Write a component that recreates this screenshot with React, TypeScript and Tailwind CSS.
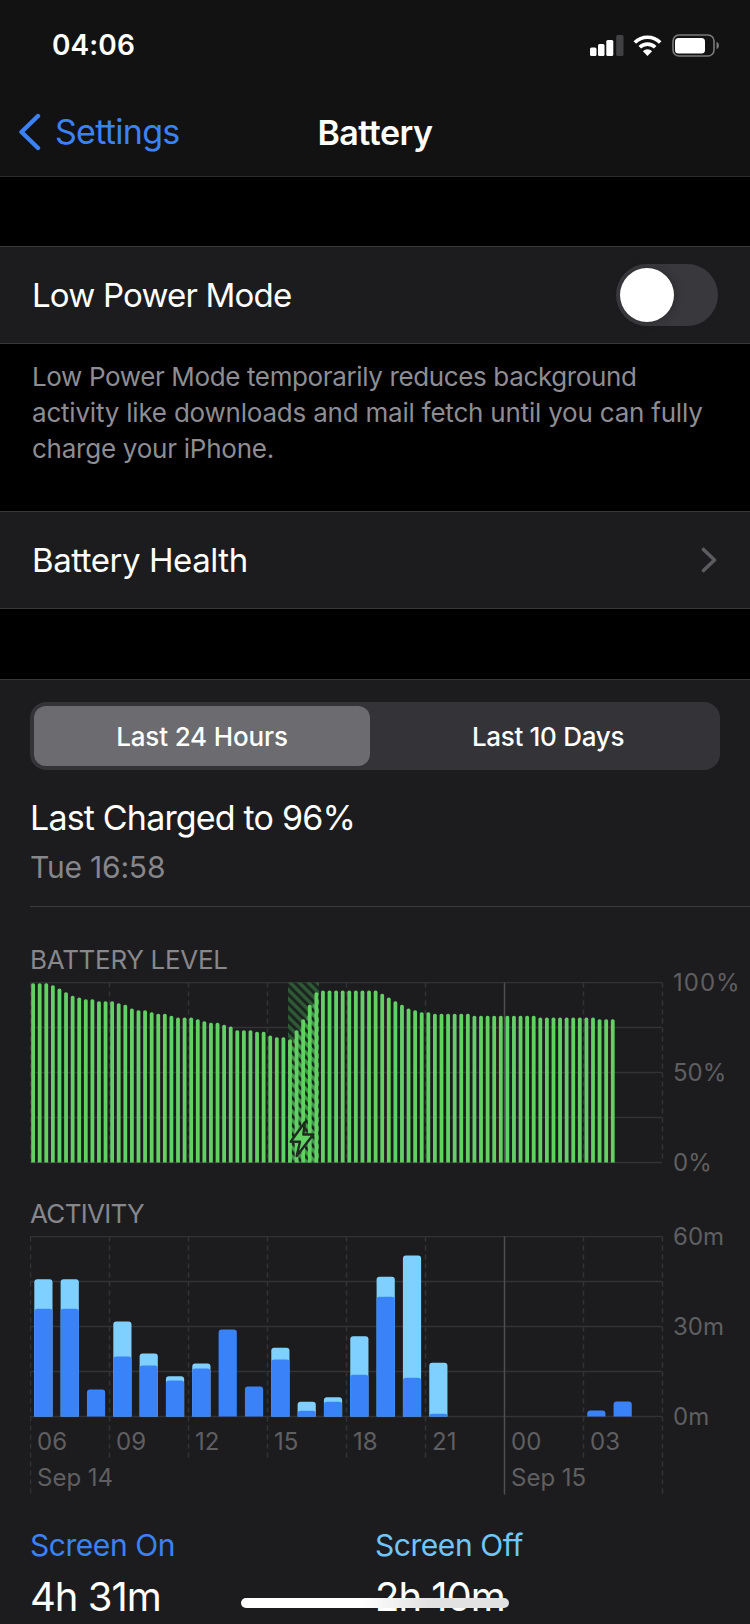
import React from "react";

const font = "font-['Inter','Liberation_Sans',sans-serif]";

const levelTops = [
  160,160,160,166,176,187,198,203,208,208,214,214,214,220,225,236,241,241,247,252,252,258,263,263,263,268,274,279,279,285,290,301,301,301,306,306,317,322,322,328,301,268,225,187,
  182,182,182,182,182,182,182,182,
  182,192,203,214,225,236,241,247,247,252,252,252,252,252,252,258,258,258,258,258,258,258,258,258,258,263,263,263,263,263,263,263,263,263,268,268,268,
];

const activity: [number, number, number][] = [
  [0,268,357],[1,268,357],[2,599,599],[3,395,500],[4,491,527],[5,559,572],[6,521,536],[7,419,419],[8,590,590],
  [9,474,509],[10,636,663],[11,622,636],[12,439,555],[13,261,321],[14,197,564],[15,519,672],[21,662,662],[22,635,635],
];

const grid = [30.5, 109.5, 188.5, 267.5, 346.5, 425.5, 504.5, 583.5, 662.5];

function roundTop(x: number, y: number, w: number, b: number, r: number) {
  const rr = Math.min(r, b - y);
  return `M${x} ${b}V${y + rr}Q${x} ${y} ${x + rr} ${y}H${x + w - rr}Q${x + w} ${y} ${x + w} ${y + rr}V${b}Z`;
}

function BatteryChart() {
  const base = 180;
  const tops = levelTops.map((t) => (t - 158) / 3);
  const bx = (i: number) => 1.2 + i * 6.587;
  const under = tops.map((t, i) => ({ t, x: bx(i), i })).filter((p) => p.i >= 39 && p.i <= 43);
  const poly = `258,${base} 258,${under[0].t} ${under.map((p) => `${p.x + 1.9},${p.t + 6}`).join(" ")} 289,${under[4].t} 289,${base}`;
  return (
    <svg width="640" height="182" viewBox="30 0 640 182" className="block shrink-0">
      <g transform="translate(30 0.5)">
        <defs>
          <pattern id="hatch" width="6.4" height="6.4" patternUnits="userSpaceOnUse" patternTransform="rotate(-45)">
            <rect width="3" height="6.4" fill="#1c2420" />
          </pattern>
        </defs>
        {[0, 45, 90, 135, 180].map((y) => (
          <line key={y} x1="0" x2="632" y1={y} y2={y} stroke="#333335" strokeWidth="1.5" />
        ))}
        {grid.map((x, i) =>
          i === 6 ? (
            <line key={x} x1={x - 30} x2={x - 30} y1="0" y2="180" stroke="#4e4e50" strokeWidth="1.5" />
          ) : (
            <line key={x} x1={x - 30} x2={x - 30} y1="0" y2="180" stroke="#333335" strokeWidth="1.5" strokeDasharray="5 4" />
          ),
        )}
        <rect x="258" y="0" width="31" height="180" fill="#2f5a36" />
        <polygon points={poly} fill="#43964a" />
        <rect x="258" y="0" width="31" height="180" fill="url(#hatch)" />
        {tops.map((t, i) => (
          <path key={i} d={roundTop(bx(i), t, 3.8, base, 1.7)} fill="#62d163" />
        ))}
        <path
          d="M275 139.5L260.7 159.3H270L266.7 173.5L283.3 152H273.3Z"
          fill="#62d163"
          stroke="#1f2b21"
          strokeWidth="2.4"
          strokeLinejoin="round"
        />
      </g>
    </svg>
  );
}

function ActivityChart() {
  return (
    <svg width="640" height="259" viewBox="30 0 640 259" className="block shrink-0">
      <g transform="translate(30 0.5)">
        {[0, 45, 90, 135, 180].map((y) => (
          <line key={y} x1="0" x2="632" y1={y} y2={y} stroke="#333335" strokeWidth="1.5" />
        ))}
        {grid.map((x, i) => {
          const tall = i === 0 || i === 6 || i === 8;
          return i === 6 ? (
            <line key={x} x1={x - 30} x2={x - 30} y1="0" y2="258" stroke="#4e4e50" strokeWidth="1.5" />
          ) : (
            <line key={x} x1={x - 30} x2={x - 30} y1="0" y2={tall ? 258 : 225} stroke="#333335" strokeWidth="1.5" strokeDasharray="5 4" />
          );
        })}
        {activity.map(([i, top, dark]) => {
          const x = 4.3 + i * 26.33;
          const y = (top - 140) / 3;
          const d = (dark - 140) / 3;
          return (
            <g key={i}>
              {top !== dark && <path d={roundTop(x, y, 18.2, 180, 3)} fill="#80d0ff" />}
              <path d={roundTop(x, d, 18.2, 180, 3)} fill="#3a82f7" />
            </g>
          );
        })}
      </g>
    </svg>
  );
}

function Divider() {
  return <div className="h-[1px] bg-[#38383a]" />;
}

export default function App() {
  return (
    <div className={`${font} relative w-[750px] h-[1624px] overflow-hidden bg-black text-white`}>
      <header className="h-[177px] bg-[#121212] border-b border-[#2c2c2e]">
        <div className="flex h-[90px] items-center justify-between pl-[52px] pr-[31px]">
          <span className="text-[28px] font-semibold tracking-[0.1px]">04:06</span>
          <div className="flex items-center">
            <svg width="34" height="21" viewBox="0 0 34 21" className="mr-[9px]">
              <rect x="0" y="12.5" width="6.5" height="8.5" rx="1.5" fill="#fff" />
              <rect x="8" y="9" width="6.5" height="12" rx="1.5" fill="#fff" />
              <rect x="16.3" y="5" width="7" height="16" rx="1.5" fill="#fff" />
              <rect x="26.2" y="0" width="7.3" height="21" rx="1.5" fill="#414143" />
            </svg>
            <svg width="29" height="21" viewBox="0 0 29 21" fill="none" stroke="#fff" strokeWidth="3.6" className="mr-[10px]">
              <path d="M1.8 7.5a18 18 0 0 1 25.4 0" />
              <path d="M6.8 12.3a11 11 0 0 1 15.4 0" />
              <path d="M14.5 21l-4.6-4.8a6.4 6.4 0 0 1 9.2 0Z" fill="#fff" stroke="none" />
            </svg>
            <svg width="47" height="23" viewBox="0 0 47 23">
              <rect x="1" y="1" width="41" height="21" rx="6" fill="none" stroke="#7a7a7c" strokeWidth="1.6" />
              <rect x="3" y="4" width="30" height="15.5" rx="3.5" fill="#fff" />
              <path d="M44.5 7.8v7.4a3.8 3.8 0 0 0 2.5-3.7a3.8 3.8 0 0 0-2.5-3.7Z" fill="#7a7a7c" />
            </svg>
          </div>
        </div>
        <div className="relative flex h-[86px] items-center justify-center">
          <div className="absolute left-[18px] top-[23px] flex items-center gap-[14px] text-[#3b82f6]">
            <svg width="23" height="38" viewBox="0 0 23 38" fill="none" stroke="#3b82f6" strokeWidth="4.4" strokeLinecap="round" strokeLinejoin="round">
              <path d="M20 3L3.5 19L20 35" />
            </svg>
            <span className="text-[34px] tracking-[-0.7px] leading-[38px]">Settings</span>
          </div>
          <span className="text-[34px] font-semibold tracking-[-0.5px] mt-[-2px]">Battery</span>
        </div>
      </header>

      <div className="h-[69px]" />

      <Divider />
      <div className="flex h-[96px] items-center justify-between bg-[#1c1c1e] pl-[32px] pr-[32px]">
        <span className="pt-[2px] text-[33px] tracking-[-0.8px]">Low Power Mode</span>
        <div className="flex h-[62px] w-[102px] items-center rounded-full bg-[#39393d] pl-[4px]">
          <div className="h-[54px] w-[54px] rounded-full bg-white shadow-[3px_0_8px_rgba(0,0,0,0.2)]" />
        </div>
      </div>
      <Divider />
      <p className="h-[167px] pl-[32px] pr-[20px] pt-[15px] text-[26px] leading-[36px] tracking-[-0.25px] text-[#8d8d93]">
        <span className="tracking-[-0.37px]">Low Power Mode temporarily reduces background</span>
        <br />
        <span className="tracking-[-0.21px]">activity like downloads and mail fetch until you can fully</span>
        <br />
        charge your iPhone.
      </p>
      <Divider />
      <div className="flex h-[96px] items-center justify-between bg-[#1c1c1e] pl-[32px] pr-[33px]">
        <span className="pt-[2px] text-[33px] tracking-[-0.45px]">Battery Health</span>
        <svg width="16" height="26" viewBox="0 0 16 26" fill="none" stroke="#5c5c60" strokeWidth="3.6" strokeLinecap="round" strokeLinejoin="round">
          <path d="M2.5 2.5L13.5 13L2.5 23.5" />
        </svg>
      </div>
      <Divider />

      <div className="h-[70px]" />

      <Divider />
      <section className="bg-[#1c1c1e] pl-[30px] pt-[22px] h-[944px]">
        <div className="flex h-[68px] w-[690px] rounded-[16px] bg-[#333338] p-[4px]">
          <div className="flex w-[336px] items-center justify-center rounded-[12px] bg-[#6c6c70] text-[26px] font-medium tracking-[-0.15px]">
            Last 24 Hours
          </div>
          <div className="flex flex-1 items-center justify-center pl-[10px] text-[26px] font-medium tracking-[-0.3px]">
            Last 10 Days
          </div>
        </div>
        <div className="mt-[28px] text-[34px] leading-[40px] tracking-[-0.82px]">Last Charged to 96%</div>
        <div className="mt-[9px] text-[30px] leading-[40px] tracking-[-0.2px] text-[#86868b]">Tue 16:58</div>
        <div className="mt-[19px] h-[1px] bg-[#3a3a3c]" />

        <div className="mt-[37px] text-[26px] leading-[32px] tracking-[-0.3px] text-[#87878c]">BATTERY LEVEL</div>
        <div className="mt-[6px] flex">
          <BatteryChart />
          <div className="flex h-[182px] flex-col justify-between text-[24px] leading-[24px] text-[#5f5f61]">
            <span className="mt-[-11px] ml-[3px] tracking-[1px]">100%</span>
            <span className="ml-[3px]">50%</span>
            <span className="mb-[-11px] ml-[3px]">0%</span>
          </div>
        </div>

        <div className="mt-[34px] text-[26px] leading-[32px] tracking-[-0.7px] text-[#87878c]">ACTIVITY</div>
        <div className="relative mt-[6px] flex">
          <ActivityChart />
          <div className="flex h-[182px] flex-col justify-between text-[24px] leading-[24px] text-[#5f5f61]">
            <span className="mt-[-11px] ml-[3px]">60m</span>
            <span className="ml-[3px]">30m</span>
            <span className="mb-[-11px] ml-[3px]">0m</span>
          </div>
          <div className="absolute left-0 top-[191px] w-[640px] text-[24px] leading-[30px] text-[#5f5f61]">
            <div className="grid grid-cols-[79px_79px_79px_79px_79px_79px_79px_79px]">
              {["06", "09", "12", "15", "18", "21", "00", "03"].map((t) => (
                <span key={t} className="pl-[7px]">{t}</span>
              ))}
            </div>
            <div className="mt-[6px] grid grid-cols-[474px_158px]">
              <span className="pl-[7px]">Sep 14</span>
              <span className="pl-[7px]">Sep 15</span>
            </div>
          </div>
        </div>

        <div className="mt-[32px] grid grid-cols-[345px_345px]">
          <div>
            <div className="text-[30px] leading-[36px] tracking-[-0.45px] text-[#3b82f6]">Screen On</div>
            <div className="mt-[11px] text-[40px] leading-[46px] tracking-[-1px]">4h 31m</div>
          </div>
          <div>
            <div className="text-[30px] leading-[36px] tracking-[-0.45px] text-[#70c6f8]">Screen Off</div>
            <div className="mt-[11px] text-[40px] leading-[46px] tracking-[-1px]">2h 10m</div>
          </div>
        </div>
      </section>

      <div className="absolute left-[241px] top-[1598px] h-[10px] w-[268px] rounded-full bg-gradient-to-r from-white from-45% to-[#e2e2e2] to-70%" />
    </div>
  );
}
